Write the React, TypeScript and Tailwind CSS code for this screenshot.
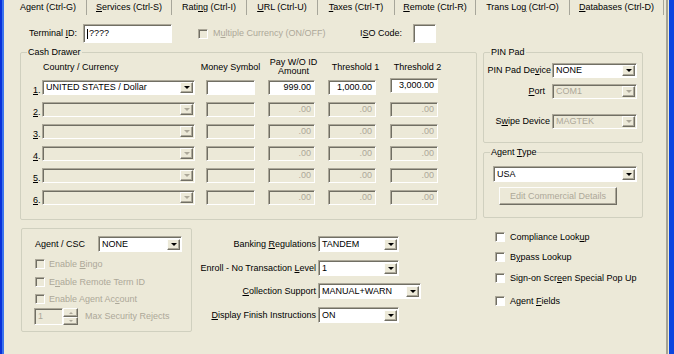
import React from "react";

const sunken =
  "border border-t-[#aca899] border-l-[#aca899] border-b-white border-r-white shadow-[inset_1px_1px_0_#716f64]";
const raised =
  "border border-t-[#fdfdfb] border-l-[#fdfdfb] border-b-[#716f64] border-r-[#716f64] shadow-[inset_-1px_-1px_0_#aca899]";
const groupBox = "border border-[#d0d0bf] rounded-[2px]";

function Arrow({ disabled, up }: { disabled?: boolean; up?: boolean }) {
  const color = disabled ? "border-t-[#aca899]" : "border-t-black";
  const colorUp = disabled ? "border-b-[#aca899]" : "border-b-black";
  return up ? (
    <span className={`w-0 h-0 border-x-[2px] border-x-transparent border-b-[2px] ${colorUp}`} />
  ) : (
    <span className={`w-0 h-0 border-x-[3px] border-x-transparent border-t-[3px] ${color}`} />
  );
}

function Combo({
  value = "",
  className = "",
  disabled = false,
}: {
  value?: string;
  className?: string;
  disabled?: boolean;
}) {
  return (
    <div
      className={`flex items-center ${sunken} ${
        disabled ? "bg-[#ece9d8] text-[#aca899]" : "bg-white text-black"
      } ${className}`}
    >
      <span className="flex-1 pl-[3px] whitespace-nowrap overflow-hidden">{value}</span>
      <span
        className={`mr-[1px] w-[13px] h-[11px] flex items-center justify-center bg-[#ece9d8] ${raised}`}
      >
        <Arrow disabled={disabled} />
      </span>
    </div>
  );
}

function Field({
  value = "",
  className = "",
  disabled = false,
}: {
  value?: string;
  className?: string;
  disabled?: boolean;
}) {
  return (
    <div
      className={`flex items-center justify-end pr-[3px] ${sunken} ${
        disabled ? "bg-[#ece9d8] text-[#aca899]" : "bg-white text-black"
      } ${className}`}
    >
      {value}
    </div>
  );
}

function Check({ disabled = false }: { disabled?: boolean }) {
  return (
    <span
      className={`block shrink-0 w-[10px] h-[10px] ${sunken} ${
        disabled ? "bg-[#ece9d8]" : "bg-white"
      }`}
    />
  );
}

const tabs = [
  { w: "w-[76px]", label: <>Agent (Ctrl-G)</> },
  { w: "w-[85px]", label: <><u>S</u>ervices (Ctrl-S)</> },
  { w: "w-[75px]", label: <>Rati<u>n</u>g (Ctrl-I)</> },
  { w: "w-[71px]", label: <><u>U</u>RL (Ctrl-U)</> },
  { w: "w-[77px]", label: <><u>T</u>axes (Ctrl-T)</> },
  { w: "w-[81px]", label: <><u>R</u>emote (Ctrl-R)</> },
  { w: "w-[94px]", label: <>Trans Lo<u>g</u>{"\u00a0(Ctrl-O)"}</> },
  { w: "w-[95px]", label: <><u>D</u>atabases (Ctrl-D)</> },
];

const drawerRows = [
  { n: "1", country: "UNITED STATES / Dollar", pay: "999.00", t1: "1,000.00", t2: "3,000.00" },
  { n: "2" },
  { n: "3" },
  { n: "4" },
  { n: "5" },
  { n: "6" },
];

export default function App() {
  return (
    <div className="w-[674px] h-[354px] flex overflow-hidden bg-[#ece9d8] text-black text-[9px] leading-[11px] font-['Liberation_Sans',Arial,sans-serif]">
      {/* window frame, left */}
      <div className="w-[2px] shrink-0 bg-[#0831d9]" />
      <div className="w-[2px] shrink-0 bg-[#3a73ee]" />

      <div className="w-[664px] shrink-0 flex flex-col border-r-2 border-r-[#a5a393]">
        {/* Tabs */}
        <div className="h-[17px] flex pl-[6px]">
          {tabs.map((t, i) => (
            <div
              key={i}
              className={`h-[15px] flex items-center justify-center whitespace-nowrap ${t.w} ${
                i === 0 ? "" : "border-l border-l-[#a7a69a]"
              } ${i === tabs.length - 1 ? "border-r border-r-[#a7a69a]" : ""}`}
            >
              <span>{t.label}</span>
            </div>
          ))}
        </div>

        {/* Terminal ID row */}
        <div className="mt-[7px] h-[19px] flex items-center">
          <span className="ml-[25px] w-[54px] whitespace-nowrap">
            Terminal <u>I</u>D:
          </span>
          <div className={`w-[89px] h-[19px] flex items-center pl-[3px] bg-white ${sunken}`}>
            <span className="w-[1px] h-[10px] bg-black mr-[1px]" />
            ????
          </div>
          <span className="ml-[26px]">
            <Check disabled />
          </span>
          <span className="ml-[5px] w-[147px] whitespace-nowrap text-[#aca899]">
            M<u>u</u>ltiple Currency (ON/OFF)
          </span>
          <span className="w-[53px] whitespace-nowrap">
            I<u>S</u>O Code:
          </span>
          <div className={`w-[23px] h-[19px] bg-white ${sunken}`} />
        </div>

        {/* Cash drawer + right column */}
        <div className="mt-[4px] flex">
          <fieldset className={`ml-[16px] w-[457px] h-[173px] ${groupBox}`}>
            <legend className="ml-[6px] px-[1px]">Cash Drawer</legend>
            <div className="h-[18px] flex items-center">
              <span className="ml-[12px] w-[9px]" />
              <span className="w-[153px] pl-[1px] whitespace-nowrap">Country / Currency</span>
              <span className="ml-[11px] w-[49px] flex justify-center whitespace-nowrap">
                Money Symbol
              </span>
              <span className="ml-[13px] w-[47px] flex justify-center pl-[4px] text-center leading-[9px] whitespace-nowrap">
                Pay W/O ID
                <br />
                Amount
              </span>
              <span className="ml-[13px] w-[48px] flex justify-center pl-[7px] whitespace-nowrap">
                Threshold 1
              </span>
              <span className="ml-[14px] w-[48px] flex justify-center pl-[7px] whitespace-nowrap">
                Threshold 2
              </span>
            </div>
            <div className="mt-[4px] flex flex-col gap-[7px]">
              {drawerRows.map((r, i) => {
                const on = i === 0;
                return (
                  <div key={r.n} className="h-[15px] flex items-start">
                    <span className="ml-[12px] w-[9px] self-end leading-[10px]">
                      <u>{r.n}</u>.
                    </span>
                    <Combo className="w-[153px] h-[15px]" value={r.country} disabled={!on} />
                    <Field className="ml-[11px] w-[49px] h-[15px]" disabled={!on} />
                    <Field className="ml-[13px] w-[47px] h-[15px]" value={on ? r.pay : ".00"} disabled={!on} />
                    <Field className="ml-[13px] w-[48px] h-[15px]" value={on ? r.t1 : ".00"} disabled={!on} />
                    <Field
                      className={`ml-[14px] w-[48px] h-[15px] ${on ? "-mt-[2px]" : ""}`}
                      value={on ? r.t2 : ".00"}
                      disabled={!on}
                    />
                  </div>
                );
              })}
            </div>
          </fieldset>

          <div className="ml-[6px] w-[160px] flex flex-col">
            <fieldset className={`h-[96px] ${groupBox}`}>
              <legend className="ml-[6px] px-[1px]">PIN Pad</legend>
              <div className="mt-[5px] h-[15px] flex items-center">
                <span className="w-[67px] text-right whitespace-nowrap">
                  PIN Pad De<u>v</u>ice
                </span>
                <Combo className="ml-[1px] w-[85px] h-[15px]" value="NONE" />
              </div>
              <div className="mt-[6px] h-[15px] flex items-center">
                <span className="w-[67px] pr-[6px] text-right whitespace-nowrap">
                  <u>P</u>ort
                </span>
                <Combo className="ml-[1px] w-[85px] h-[15px]" value="COM1" disabled />
              </div>
              <div className="mt-[15px] h-[15px] flex items-center">
                <span className="w-[67px] pr-[1px] text-right whitespace-nowrap">
                  S<u>w</u>ipe Device
                </span>
                <Combo className="ml-[1px] w-[85px] h-[15px]" value="MAGTEK" disabled />
              </div>
            </fieldset>

            <fieldset className={`mt-[4px] h-[71px] ${groupBox}`}>
              <legend className="ml-[6px] px-[1px]">
                Agent <u>T</u>ype
              </legend>
              <Combo className="mt-[8px] ml-[9px] w-[144px] h-[16px]" value="USA" />
              <div
                className={`mt-[5px] ml-[15px] w-[118px] h-[18px] flex items-center justify-center bg-[#ece9d8] text-[#aca899] whitespace-nowrap ${raised}`}
              >
                Edit Commercial Details
              </div>
            </fieldset>
          </div>
        </div>

        {/* Bottom section */}
        <div className="mt-[8px] flex items-start">
          <div className={`ml-[17px] w-[171px] h-[104px] flex flex-col ${groupBox}`}>
            <div className="mt-[7px] h-[16px] flex items-center">
              <span className="ml-[13px] w-[63px] whitespace-nowrap">Agent / CSC</span>
              <Combo className="w-[84px] h-[16px]" value="NONE" />
            </div>
            <div className="mt-[7px] h-[10px] flex items-center text-[#aca899] whitespace-nowrap">
              <span className="ml-[13px]">
                <Check disabled />
              </span>
              <span className="ml-[4px]">
                Enable <u>B</u>ingo
              </span>
            </div>
            <div className="mt-[8px] h-[10px] flex items-center text-[#aca899] whitespace-nowrap">
              <span className="ml-[13px]">
                <Check disabled />
              </span>
              <span className="ml-[4px]">
                E<u>n</u>able Remote Term ID
              </span>
            </div>
            <div className="mt-[7px] h-[10px] flex items-center text-[#aca899] whitespace-nowrap">
              <span className="ml-[13px]">
                <Check disabled />
              </span>
              <span className="ml-[4px]">
                Enable Agent Ac<u>c</u>ount
              </span>
            </div>
            <div className="mt-[4px] h-[17px] flex items-center text-[#aca899] whitespace-nowrap">
              <div className={`ml-[12px] w-[29px] h-[17px] flex items-center pl-[3px] bg-[#ece9d8] ${sunken}`}>
                1
              </div>
              <div className="w-[15px] h-[17px] flex flex-col">
                <span className={`h-[9px] flex items-center justify-center ${raised}`}>
                  <Arrow up disabled />
                </span>
                <span className={`h-[8px] flex items-center justify-center ${raised}`}>
                  <span className="w-0 h-0 border-x-[2px] border-x-transparent border-t-[2px] border-t-[#aca899]" />
                </span>
              </div>
              <span className="ml-[7px]">Max Security Rejects</span>
            </div>
          </div>

          <div className="w-[230px] flex flex-col whitespace-nowrap">
            <div className="mt-[8px] h-[16px] flex items-center">
              <span className="w-[124px] text-right">
                Banking <u>R</u>egulations
              </span>
              <Combo className="ml-[2px] w-[81px] h-[16px]" value="TANDEM" />
            </div>
            <div className="mt-[8px] h-[16px] flex items-center">
              <span className="w-[124px] text-right">
                Enroll - No Transaction <u>L</u>evel
              </span>
              <Combo className="ml-[2px] w-[81px] h-[16px]" value="1" />
            </div>
            <div className="mt-[7px] h-[16px] flex items-center">
              <span className="w-[124px] text-right">
                <u>C</u>ollection Support
              </span>
              <Combo className="ml-[2px] w-[103px] h-[16px]" value="MANUAL+WARN" />
            </div>
            <div className="mt-[8px] h-[16px] flex items-center">
              <span className="w-[124px] text-right">
                <u>D</u>isplay Finish Instructions
              </span>
              <Combo className="ml-[2px] w-[81px] h-[16px]" value="ON" />
            </div>
          </div>

          <div className="ml-[73px] flex flex-col whitespace-nowrap">
            <div className="mt-[4px] h-[10px] flex items-center">
              <Check />
              <span className="ml-[5px]">
                Compliance Look<u>u</u>p
              </span>
            </div>
            <div className="mt-[10px] h-[10px] flex items-center">
              <Check />
              <span className="ml-[5px]">
                B<u>y</u>pass Lookup
              </span>
            </div>
            <div className="mt-[11px] h-[10px] flex items-center">
              <Check />
              <span className="ml-[5px]">
                Sign-on Scr<u>e</u>en Special Pop Up
              </span>
            </div>
            <div className="mt-[13px] h-[10px] flex items-center">
              <Check />
              <span className="ml-[5px]">
                Agent <u>F</u>ields
              </span>
            </div>
          </div>
        </div>
      </div>

      {/* window frame, right */}
      <div className="w-[1px] shrink-0 bg-[#ece9d8]" />
      <div className="flex-1 bg-[#0a46e0]" />
    </div>
  );
}
